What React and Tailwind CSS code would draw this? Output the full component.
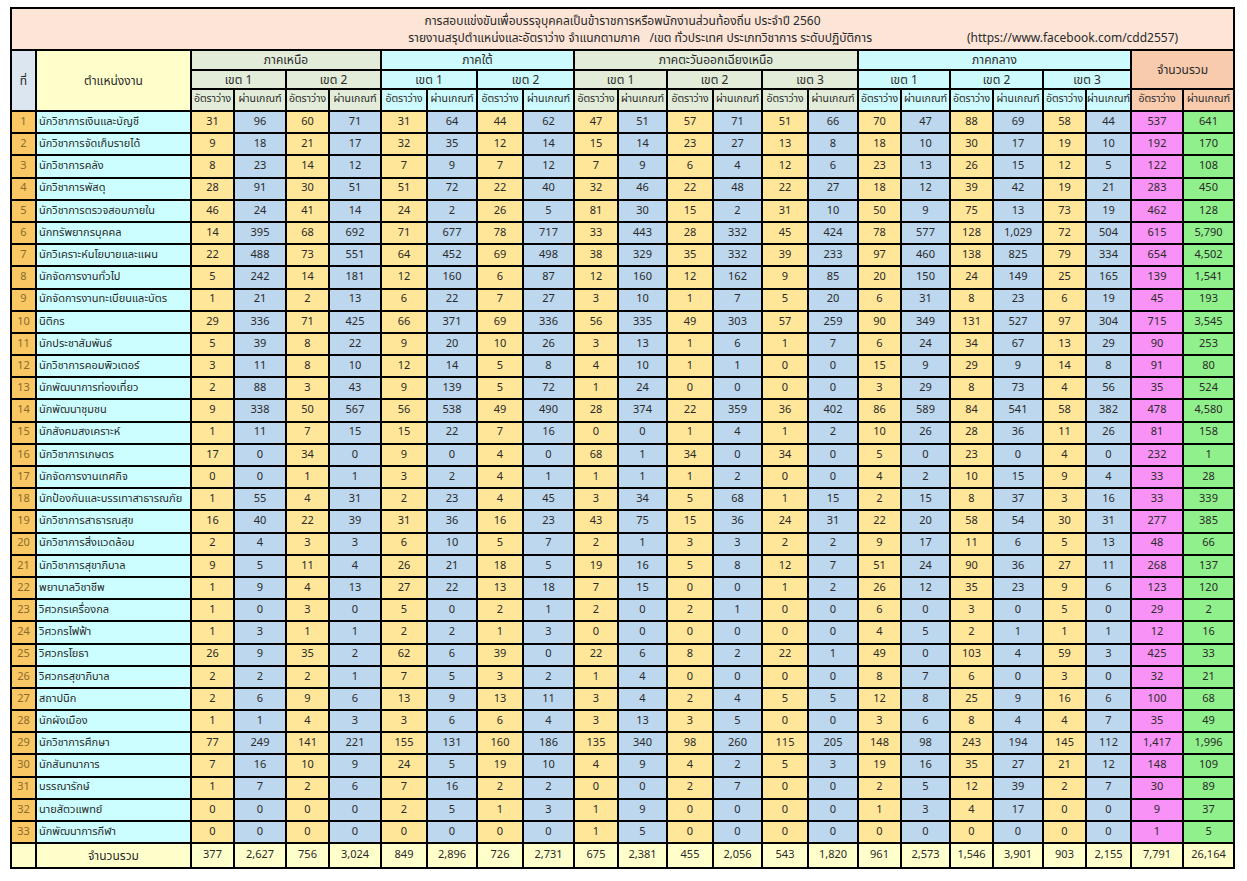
import React from "react";

const rows = [
  ["นักวิชาการเงินและบัญชี", [31,96,60,71,31,64,44,62,47,51,57,71,51,66,70,47,88,69,58,44,537,641]],
  ["นักวิชาการจัดเก็บรายได้", [9,18,21,17,32,35,12,14,15,14,23,27,13,8,18,10,30,17,19,10,192,170]],
  ["นักวิชาการคลัง", [8,23,14,12,7,9,7,12,7,9,6,4,12,6,23,13,26,15,12,5,122,108]],
  ["นักวิชาการพัสดุ", [28,91,30,51,51,72,22,40,32,46,22,48,22,27,18,12,39,42,19,21,283,450]],
  ["นักวิชาการตรวจสอบภายใน", [46,24,41,14,24,2,26,5,81,30,15,2,31,10,50,9,75,13,73,19,462,128]],
  ["นักทรัพยากรบุคคล", [14,395,68,692,71,677,78,717,33,443,28,332,45,424,78,577,128,"1,029",72,504,615,"5,790"]],
  ["นักวิเคราะห์นโยบายและแผน", [22,488,73,551,64,452,69,498,38,329,35,332,39,233,97,460,138,825,79,334,654,"4,502"]],
  ["นักจัดการงานทั่วไป", [5,242,14,181,12,160,6,87,12,160,12,162,9,85,20,150,24,149,25,165,139,"1,541"]],
  ["นักจัดการงานทะเบียนและบัตร", [1,21,2,13,6,22,7,27,3,10,1,7,5,20,6,31,8,23,6,19,45,193]],
  ["นิติกร", [29,336,71,425,66,371,69,336,56,335,49,303,57,259,90,349,131,527,97,304,715,"3,545"]],
  ["นักประชาสัมพันธ์", [5,39,8,22,9,20,10,26,3,13,1,6,1,7,6,24,34,67,13,29,90,253]],
  ["นักวิชาการคอมพิวเตอร์", [3,11,8,10,12,14,5,8,4,10,1,1,0,0,15,9,29,9,14,8,91,80]],
  ["นักพัฒนาการท่องเที่ยว", [2,88,3,43,9,139,5,72,1,24,0,0,0,0,3,29,8,73,4,56,35,524]],
  ["นักพัฒนาชุมชน", [9,338,50,567,56,538,49,490,28,374,22,359,36,402,86,589,84,541,58,382,478,"4,580"]],
  ["นักสังคมสงเคราะห์", [1,11,7,15,15,22,7,16,0,0,1,4,1,2,10,26,28,36,11,26,81,158]],
  ["นักวิชาการเกษตร", [17,0,34,0,9,0,4,0,68,1,34,0,34,0,5,0,23,0,4,0,232,1]],
  ["นักจัดการงานเทศกิจ", [0,0,1,1,3,2,4,1,1,1,1,2,0,0,4,2,10,15,9,4,33,28]],
  ["นักป้องกันและบรรเทาสาธารณภัย", [1,55,4,31,2,23,4,45,3,34,5,68,1,15,2,15,8,37,3,16,33,339]],
  ["นักวิชาการสาธารณสุข", [16,40,22,39,31,36,16,23,43,75,15,36,24,31,22,20,58,54,30,31,277,385]],
  ["นักวิชาการสิ่งแวดล้อม", [2,4,3,3,6,10,5,7,2,1,3,3,2,2,9,17,11,6,5,13,48,66]],
  ["นักวิชาการสุขาภิบาล", [9,5,11,4,26,21,18,5,19,16,5,8,12,7,51,24,90,36,27,11,268,137]],
  ["พยาบาลวิชาชีพ", [1,9,4,13,27,22,13,18,7,15,0,0,1,2,26,12,35,23,9,6,123,120]],
  ["วิศวกรเครื่องกล", [1,0,3,0,5,0,2,1,2,0,2,1,0,0,6,0,3,0,5,0,29,2]],
  ["วิศวกรไฟฟ้า", [1,3,1,1,2,2,1,3,0,0,0,0,0,0,4,5,2,1,1,1,12,16]],
  ["วิศวกรโยธา", [26,9,35,2,62,6,39,0,22,6,8,2,22,1,49,0,103,4,59,3,425,33]],
  ["วิศวกรสุขาภิบาล", [2,2,2,1,7,5,3,2,1,4,0,0,0,0,8,7,6,0,3,0,32,21]],
  ["สถาปนิก", [2,6,9,6,13,9,13,11,3,4,2,4,5,5,12,8,25,9,16,6,100,68]],
  ["นักผังเมือง", [1,1,4,3,3,6,6,4,3,13,3,5,0,0,3,6,8,4,4,7,35,49]],
  ["นักวิชาการศึกษา", [77,249,141,221,155,131,160,186,135,340,98,260,115,205,148,98,243,194,145,112,"1,417","1,996"]],
  ["นักสันทนาการ", [7,16,10,9,24,5,19,10,4,9,4,2,5,3,19,16,35,27,21,12,148,109]],
  ["บรรณารักษ์", [1,7,2,6,7,16,2,2,0,0,2,7,0,0,2,5,12,39,2,7,30,89]],
  ["นายสัตวแพทย์", [0,0,0,0,2,5,1,3,1,9,0,0,0,0,1,3,4,17,0,0,9,37]],
  ["นักพัฒนาการกีฬา", [0,0,0,0,0,0,0,0,1,5,0,0,0,0,0,0,0,0,0,0,1,5]],
];

const totals = [377,"2,627",756,"3,024",849,"2,896",726,"2,731",675,"2,381",455,"2,056",543,"1,820",961,"2,573","1,546","3,901",903,"2,155","7,791","26,164"];

const colClasses = [
  "w-[25px]", "w-[155px]",
  "w-[43px]", "w-[52px]", "w-[43px]", "w-[52px]",
  "w-[46px]", "w-[50px]", "w-[46px]", "w-[51px]",
  "w-[44px]", "w-[49px]", "w-[46px]", "w-[49px]", "w-[46px]", "w-[50px]",
  "w-[43px]", "w-[49px]", "w-[43px]", "w-[50px]", "w-[43px]", "w-[45px]",
  "w-[52px]", "w-[51px]",
];

const regions = [
  { name: "ภาคเหนือ", zones: ["เขต 1", "เขต 2"], bg: "bg-[#e2ecd8]" },
  { name: "ภาคใต้", zones: ["เขต 1", "เขต 2"], bg: "bg-[#cdfafc]" },
  { name: "ภาคตะวันออกเฉียงเหนือ", zones: ["เขต 1", "เขต 2", "เขต 3"], bg: "bg-[#e2ecd8]" },
  { name: "ภาคกลาง", zones: ["เขต 1", "เขต 2", "เขต 3"], bg: "bg-[#cdfafc]" },
];

const cellB = "border-2 border-black";

function numBg(i) {
  if (i === 20) return "bg-[#f892f6]";
  if (i === 21) return "bg-[#90f08b]";
  return i % 2 === 0 ? "bg-[#ffe699]" : "bg-[#bdd7ee]";
}

export default function App() {
  return (
    <div
      className="bg-white w-[1247px] h-[881px] pl-[10px] pt-[7px] text-[#2a2a2a]"
      style={{ fontFamily: "Tahoma, 'Noto Sans Thai', 'Noto Sans', 'DejaVu Sans', sans-serif" }}
    >
      <table className="table-fixed border-collapse w-[1223px] border-2 border-black">
        <colgroup>
          {colClasses.map((c, i) => (
            <col key={i} className={c} />
          ))}
        </colgroup>
        <thead>
          <tr className="h-[42px]">
            <th colSpan={24} className={`${cellB} bg-[#fce4d6] font-normal text-[12px] leading-[17px] p-0`}>
              <div className="text-center pt-[1px]">การสอบแข่งขันเพื่อบรรจุบุคคลเป็นข้าราชการหรือพนักงานส่วนท้องถิ่น ประจำปี 2560</div>
              <div className="grid grid-cols-[955px_1fr] text-left">
                <div className="text-right pr-[95px] whitespace-pre">รายงานสรุปตำแหน่งและอัตราว่าง จำแนกตามภาค   /เขต ทั่วประเทศ ประเภทวิชาการ ระดับปฏิบัติการ</div>
                <div>(https://www.facebook.com/cdd2557)</div>
              </div>
            </th>
          </tr>
          <tr className="h-[20px]">
            <th rowSpan={3} className={`${cellB} bg-[#dce6f1] font-normal text-[12px]`}>ที่</th>
            <th rowSpan={3} className={`${cellB} bg-[#ffffcc] font-normal text-[12px]`}>ตำแหน่งงาน</th>
            {regions.map((r) => (
              <th key={r.name} colSpan={r.zones.length * 2} className={`${cellB} ${r.bg} font-normal text-[12px] leading-[14px]`}>
                {r.name}
              </th>
            ))}
            <th rowSpan={2} colSpan={2} className={`${cellB} bg-[#f8cbad] font-normal text-[12px]`}>จำนวนรวม</th>
          </tr>
          <tr className="h-[19px]">
            {regions.map((r) =>
              r.zones.map((z, i) => (
                <th key={r.name + i} colSpan={2} className={`${cellB} ${r.bg} font-normal text-[12px] leading-[14px]`}>
                  {z}
                </th>
              ))
            )}
          </tr>
          <tr className="h-[22px]">
            {regions.map((r) =>
              r.zones.map((z, i) => (
                <React.Fragment key={r.name + "s" + i}>
                  <th className={`${cellB} ${r.bg} font-normal text-[10.5px] p-0 whitespace-nowrap`}>อัตราว่าง</th>
                  <th className={`${cellB} ${r.bg} font-normal text-[10.5px] p-0 whitespace-nowrap`}>ผ่านเกณฑ์</th>
                </React.Fragment>
              ))
            )}
            <th className={`${cellB} bg-[#f8cbad] font-normal text-[10.5px] p-0 whitespace-nowrap`}>อัตราว่าง</th>
            <th className={`${cellB} bg-[#f8cbad] font-normal text-[10.5px] p-0 whitespace-nowrap`}>ผ่านเกณฑ์</th>
          </tr>
        </thead>
        <tbody>
          {rows.map(([name, vals], r) => (
            <tr key={r} className="h-[22.2px]">
              <td className={`${cellB} bg-[#f9c763] text-[#8a6a2e] text-[11px] text-center p-0`}>{r + 1}</td>
              <td className={`${cellB} bg-[#ccfeff] text-[11px] pl-[2px] py-0 whitespace-nowrap overflow-hidden`}>{name}</td>
              {vals.map((v, i) => (
                <td key={i} className={`${cellB} ${numBg(i)} text-[11px] text-center p-0`}>{v}</td>
              ))}
            </tr>
          ))}
          <tr className="h-[25px]">
            <td className={`${cellB} bg-[#ffffcc]`}></td>
            <td className={`${cellB} bg-[#ffffcc] text-[12px] text-center p-0`}>จำนวนรวม</td>
            {totals.map((v, i) => (
              <td key={i} className={`${cellB} bg-[#ffffcc] text-[11px] text-center p-0`}>{v}</td>
            ))}
          </tr>
        </tbody>
      </table>
    </div>
  );
}
